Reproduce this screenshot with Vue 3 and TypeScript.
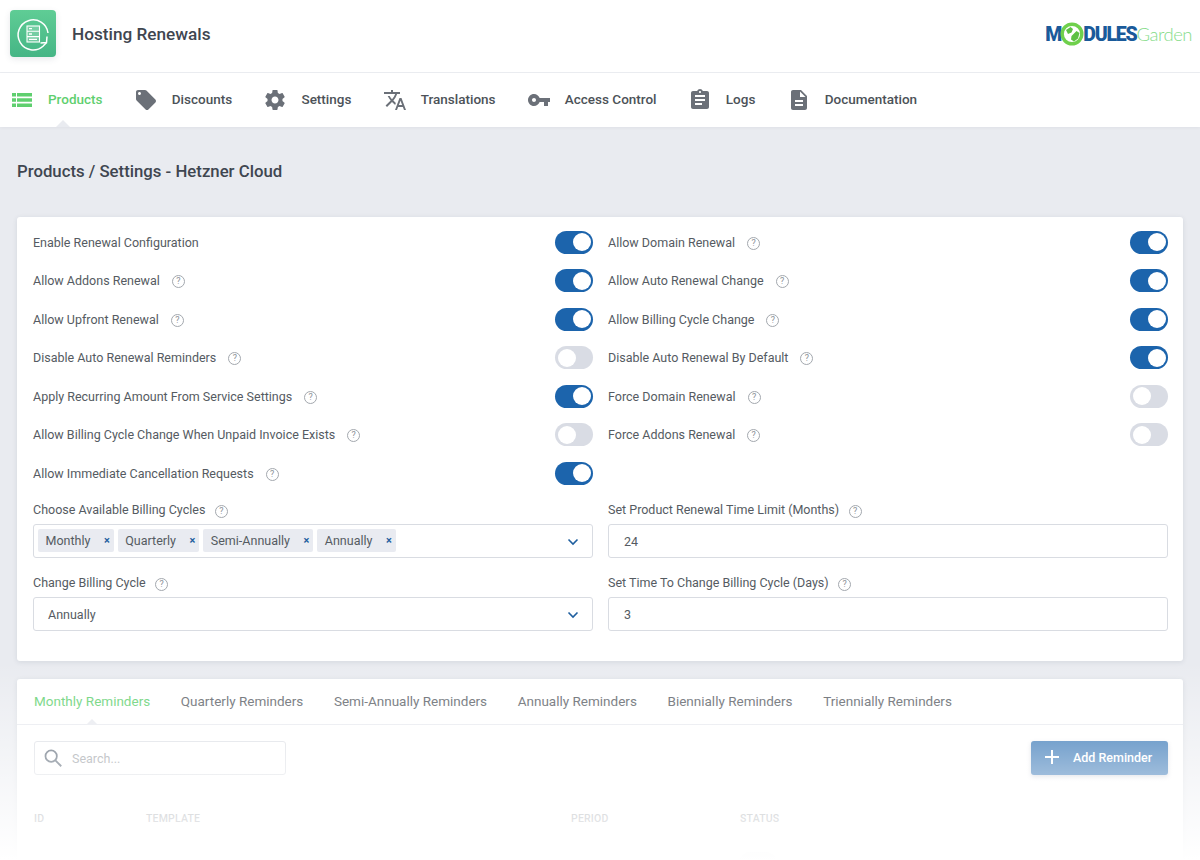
<script setup lang="ts">
interface NavItem { label: string; d: string; active?: boolean }
const nav: NavItem[] = [
  { label: 'Products', active: true, d: 'M2 5h4v3.6H2zM7 5h15v3.6H7zM2 10.2h4v3.6H2zM7 10.2h15v3.6H7zM2 15.4h4V19H2zM7 15.4h15V19H7z' },
  { label: 'Discounts', d: 'M21.41 11.58l-9-9C12.05 2.22 11.55 2 11 2H4c-1.1 0-2 .9-2 2v7c0 .55.22 1.05.59 1.42l9 9c.36.36.86.58 1.41.58.55 0 1.05-.22 1.41-.59l7-7c.37-.36.59-.86.59-1.41 0-.55-.23-1.06-.59-1.42zM5.5 7C4.67 7 4 6.33 4 5.5S4.67 4 5.5 4 7 4.67 7 5.5 6.33 7 5.5 7z' },
  { label: 'Settings', d: 'M19.43 12.98c.04-.32.07-.64.07-.98s-.03-.66-.07-.98l2.11-1.65c.19-.15.24-.42.12-.64l-2-3.46c-.12-.22-.39-.3-.61-.22l-2.49 1c-.52-.4-1.08-.73-1.69-.98l-.38-2.65C14.46 2.18 14.25 2 14 2h-4c-.25 0-.46.18-.49.42l-.38 2.65c-.61.25-1.17.59-1.69.98l-2.49-1c-.23-.09-.49 0-.61.22l-2 3.46c-.13.22-.07.49.12.64l2.11 1.65c-.04.32-.07.65-.07.98s.03.66.07.98l-2.11 1.65c-.19.15-.24.42-.12.64l2 3.46c.12.22.39.3.61.22l2.49-1c.52.4 1.08.73 1.69.98l.38 2.65c.03.24.24.42.49.42h4c.25 0 .46-.18.49-.42l.38-2.65c.61-.25 1.17-.59 1.69-.98l2.49 1c.23.09.49 0 .61-.22l2-3.46c.12-.22.07-.49-.12-.64l-2.11-1.65zM12 15.5c-1.93 0-3.5-1.57-3.5-3.5s1.57-3.5 3.5-3.5 3.5 1.57 3.5 3.5-1.57 3.5-3.5 3.5z' },
  { label: 'Translations', d: 'M12.87 15.07l-2.54-2.51.03-.03c1.74-1.94 2.98-4.17 3.71-6.53H17V4h-7V2H8v2H1v1.99h11.17C11.5 7.92 10.44 9.75 9 11.35 8.07 10.32 7.3 9.19 6.69 8h-2c.73 1.63 1.73 3.17 2.98 4.56l-5.09 5.02L4 19l5-5 3.11 3.11.76-2.04zM18.5 10h-2L12 22h2l1.12-3h4.75L21 22h2l-4.5-12zm-2.62 7l1.62-4.33L19.12 17h-3.24z' },
  { label: 'Access Control', d: 'M12.65 10C11.83 7.67 9.61 6 7 6c-3.31 0-6 2.69-6 6s2.69 6 6 6c2.61 0 4.83-1.67 5.65-4H17v4h4v-4h2v-4H12.65zM7 14c-1.1 0-2-.9-2-2s.9-2 2-2 2 .9 2 2-.9 2-2 2z' },
  { label: 'Logs', d: 'M19 3h-4.18C14.4 1.84 13.3 1 12 1c-1.3 0-2.4.84-2.82 2H5c-1.1 0-2 .9-2 2v14c0 1.1.9 2 2 2h14c1.1 0 2-.9 2-2V5c0-1.1-.9-2-2-2zm-7 0c.55 0 1 .45 1 1s-.45 1-1 1-1-.45-1-1 .45-1 1-1zm2 14H7v-2h7v2zm3-4H7v-2h10v2zm0-4H7V7h10v2z' },
  { label: 'Documentation', d: 'M14 2H6c-1.1 0-1.99.9-1.99 2L4 20c0 1.1.89 2 1.99 2H18c1.1 0 2-.9 2-2V8l-6-6zm2 16H8v-2h8v2zm0-4H8v-2h8v2zm-3-5V3.5L18.5 9H13z' },
]

interface Row { label: string; help: boolean; on: boolean }
const rows: (Row | null)[] = [
  { label: 'Enable Renewal Configuration', help: false, on: true },
  { label: 'Allow Domain Renewal', help: true, on: true },
  { label: 'Allow Addons Renewal', help: true, on: true },
  { label: 'Allow Auto Renewal Change', help: true, on: true },
  { label: 'Allow Upfront Renewal', help: true, on: true },
  { label: 'Allow Billing Cycle Change', help: true, on: true },
  { label: 'Disable Auto Renewal Reminders', help: true, on: false },
  { label: 'Disable Auto Renewal By Default', help: true, on: true },
  { label: 'Apply Recurring Amount From Service Settings', help: true, on: true },
  { label: 'Force Domain Renewal', help: true, on: false },
  { label: 'Allow Billing Cycle Change When Unpaid Invoice Exists', help: true, on: false },
  { label: 'Force Addons Renewal', help: true, on: false },
  { label: 'Allow Immediate Cancellation Requests', help: true, on: true },
  null,
]
const cycles = ['Monthly', 'Quarterly', 'Semi-Annually', 'Annually']
const tabs = ['Monthly Reminders', 'Quarterly Reminders', 'Semi-Annually Reminders', 'Annually Reminders', 'Biennially Reminders', 'Triennially Reminders']
</script>

<template>
  <div class="page">
    <header class="top">
      <div class="brand">
        <div class="app-icon">
          <svg viewBox="0 0 46 47" width="46" height="47" fill="none">
            <path d="M38 23A15 15 0 1 0 33 36.2l3.5-3.7" stroke="#fff" stroke-width="1.5" />
            <path d="M30.5 33l6-.5.5-6" stroke="#fff" stroke-width="1.5" />
            <rect x="17" y="16" width="12.5" height="16" fill="#dff5e9" fill-opacity=".25" stroke="#fff" stroke-width="1.1" />
            <path d="M17 21.3h12.5M17 26.6h12.5" stroke="#fff" stroke-width="1.1" />
            <path d="M19 18.7h3M19 24h3M19 29.3h8" stroke="#fff" stroke-width="1.3" />
          </svg>
        </div>
        <span class="app-name">Hosting Renewals</span>
      </div>
      <div class="logo">
        <span class="logo-bold">M</span>
        <svg class="globe" viewBox="0 0 24 24" width="24" height="24">
          <circle cx="12" cy="12" r="9.8" fill="#fff" stroke="#6fd04c" stroke-width="3.4" />
          <path d="M6 8l4.500-3 2.500 2-1.500 3.500L8 12zM11.500 14l5-5 3 2-1.500 5.500-4 3-3-2z" fill="#5cc043" />
        </svg>
        <span class="logo-bold">DULES</span><span class="logo-thin">Garden</span>
      </div>
    </header>

    <nav class="nav">
      <a v-for="n in nav" :key="n.label" class="nav-item" :class="{ active: n.active }">
        <svg class="nav-icon" viewBox="0 0 24 24" width="24" height="24"><path :d="n.d" /></svg>
        <span>{{ n.label }}</span>
      </a>
    </nav>

    <main class="main">
      <h1 class="title">Products / Settings - Hetzner Cloud</h1>

      <section class="card settings">
        <div class="toggles">
          <template v-for="(r, i) in rows" :key="i">
            <div v-if="r" class="row">
              <span class="label">{{ r.label }}<span v-if="r.help" class="help">?</span></span>
              <span class="toggle" :class="{ on: r.on }"><span class="knob"></span></span>
            </div>
            <div v-else></div>
          </template>
        </div>

        <div class="fields">
          <div class="field">
            <div class="label">Choose Available Billing Cycles<span class="help">?</span></div>
            <div class="input tags-input">
              <span v-for="c in cycles" :key="c" class="tag">{{ c }}<span class="x">×</span></span>
              <svg class="chev" viewBox="0 0 12 8" width="12" height="8" fill="none"><path d="M1.5 1.5L6 6l4.500-4.500" stroke="#1f5f9f" stroke-width="1.6" /></svg>
            </div>
          </div>
          <div class="field">
            <div class="label">Set Product Renewal Time Limit (Months)<span class="help">?</span></div>
            <div class="input">24</div>
          </div>
          <div class="field">
            <div class="label">Change Billing Cycle<span class="help">?</span></div>
            <div class="input select">Annually
              <svg class="chev" viewBox="0 0 12 8" width="12" height="8" fill="none"><path d="M1.5 1.5L6 6l4.500-4.500" stroke="#1f5f9f" stroke-width="1.6" /></svg>
            </div>
          </div>
          <div class="field">
            <div class="label">Set Time To Change Billing Cycle (Days)<span class="help">?</span></div>
            <div class="input">3</div>
          </div>
        </div>
      </section>

      <section class="card reminders">
        <div class="tabs">
          <span v-for="(t, i) in tabs" :key="t" class="tab" :class="{ active: i === 0 }">{{ t }}</span>
        </div>
        <div class="toolbar">
          <div class="search">
            <svg viewBox="0 0 24 24" width="22" height="22" fill="none"><circle cx="10" cy="10" r="6.2" stroke="#4a5868" stroke-width="1.9" /><path d="M14.6 14.6L21 21" stroke="#4a5868" stroke-width="2" /></svg>
            <span class="placeholder">Search...</span>
          </div>
          <button class="add" type="button">
            <svg viewBox="0 0 16 16" width="16" height="16"><path d="M7 1h2v6h6v2H9v6H7V9H1V7h6z" fill="#fff" /></svg>
            Add Reminder
          </button>
        </div>
        <div class="thead">
          <span class="c-id">ID</span>
          <span class="c-tpl">TEMPLATE</span>
          <span class="c-per">PERIOD</span>
          <span>STATUS</span>
        </div>
        <div class="tbody"><span class="pill"></span></div>
      </section>
    </main>

    <div class="fade"></div>
  </div>
</template>

<style>
html, body { margin: 0; background: #e9ebf0; }
</style>

<style scoped>
.page {
  position: relative;
  width: 1200px;
  height: 860px;
  overflow: hidden;
  background: #e9ebf0;
  font-family: Roboto, "Liberation Sans", sans-serif;
  color: #4c5258;
}
.top {
  height: 72px;
  box-sizing: content-box;
  background: #fff;
  border-bottom: 1px solid #eceef2;
  display: flex;
  align-items: center;
  justify-content: space-between;
  padding: 0 8px 0 10px;
}
.brand { display: flex; align-items: center; gap: 16px; margin-top: -5px; }
.app-icon {
  width: 46px;
  height: 47px;
  border-radius: 4px;
  background: linear-gradient(180deg, #5fcd95, #45b585);
  box-shadow: 0 2px 6px rgba(60, 70, 90, .12);
}
.app-icon svg { display: block; }
.app-name { font-size: 17.2px; font-weight: 500; color: #3f4650; }
.logo { display: flex; align-items: center; margin-top: -4px; }
.logo-bold { font-size: 19.5px; font-weight: 900; color: #1a5a9a; letter-spacing: -1.2px; }
.logo-thin { font-family: Lato, sans-serif; font-size: 18.5px; font-weight: 300; color: #86dc8a; letter-spacing: -.5px; }
.globe { margin: 0 -1px; }

.nav {
  height: 54px;
  background: #fff;
  display: flex;
  align-items: center;
  padding-left: 10px;
  gap: 31.3px;
  box-shadow: 0 1px 3px rgba(60, 70, 90, .06);
}
.nav-item {
  position: relative;
  display: flex;
  align-items: center;
  gap: 14px;
  height: 100%;
  font-size: 13.5px;
  font-weight: 500;
  color: #4c5258;
}
.nav-item span { margin-top: -2px; }
.nav-icon { fill: #6b7078; flex: none; }
.nav-item.active { color: #5fcf6f; }
.nav-item.active .nav-icon { fill: #5fcf6f; }
.nav-item.active::after {
  content: "";
  position: absolute;
  left: 46px;
  bottom: 0;
  border: 7px solid transparent;
  border-top: 0;
  border-bottom-color: #e9ebf0;
}

.main { padding: 0 17px; }
.title {
  margin: 0;
  padding: 33px 0 35px;
  font-size: 16.75px;
  line-height: 22px;
  font-weight: 500;
  color: #3f4650;
}
.card {
  background: #fff;
  border-radius: 3px;
  box-shadow: 0 1px 5px rgba(60, 70, 90, .12);
}
.settings { height: 444px; padding: 6px 15px 0 16px; box-sizing: border-box; }
.toggles {
  display: grid;
  grid-template-columns: 560px 560px;
  column-gap: 15px;
  grid-auto-rows: 38.5px;
}
.row { display: flex; align-items: center; justify-content: space-between; }
.row .label { padding-top: 1px; }
.label { font-size: 12.5px; line-height: 16px; color: #555b62; }
.help {
  display: inline-flex;
  align-items: center;
  justify-content: center;
  width: 11px;
  height: 11px;
  margin-left: 12px;
  border: 1px solid #a3a8ae;
  border-radius: 50%;
  font-size: 9px;
  line-height: 1;
  color: #8d9298;
  vertical-align: 1px;
}
.toggle {
  width: 38px;
  height: 23px;
  border-radius: 12px;
  background: #d9dce4;
  position: relative;
  flex: none;
}
.knob {
  position: absolute;
  top: 2.5px;
  left: 2.5px;
  width: 18px;
  height: 18px;
  border-radius: 50%;
  background: #fff;
}
.toggle.on { background: #1c64ac; }
.toggle.on .knob { left: 17.5px; }

.fields {
  display: grid;
  grid-template-columns: 560px 560px;
  column-gap: 15px;
  row-gap: 17px;
  margin-top: 9px;
}
.field .label { height: 16px; margin-bottom: 6px; }
.field .help { margin-left: 9.5px; vertical-align: 0; }
.input {
  position: relative;
  height: 34px;
  box-sizing: border-box;
  border: 1px solid #d9dce2;
  border-radius: 3px;
  display: flex;
  align-items: center;
  padding: 2px 0 0 15px;
  font-size: 12.5px;
  color: #555b62;
  background: #fff;
}
.select { padding-left: 14px; }
.tags-input { padding: 0 0 0 4px; gap: 4px; }
.tag {
  display: inline-flex;
  align-items: center;
  justify-content: space-between;
  height: 23px;
  padding: 0 4px 0 7.5px;
  box-sizing: border-box;
  border-radius: 2px;
  background: #e9ebf1;
  gap: 13.5px;
}
.x { color: #1f5f9f; font-weight: 700; font-size: 11px; }
.chev { position: absolute; right: 13px; top: 13.5px; }

.reminders { margin-top: 18px; height: 400px; }
.tabs {
  height: 45px;
  display: flex;
  align-items: center;
  gap: 30.6px;
  padding: 0 17px;
  border-bottom: 1px solid #e6e8ee;
  font-size: 13.5px;
  color: #5d6268;
}
.tab { position: relative; line-height: 45px; }
.tab.active { color: #5fcf6f; }
.tab.active::after {
  content: "";
  position: absolute;
  left: 52px;
  bottom: -1px;
  border: 6px solid transparent;
  border-top: 0;
  border-bottom-color: #e6e8ee;
}
.toolbar {
  display: flex;
  justify-content: space-between;
  padding: 16px 15px 0 17px;
}
.search {
  width: 252px;
  height: 34px;
  box-sizing: border-box;
  border: 1px solid #d9dce2;
  border-radius: 3px;
  display: flex;
  align-items: center;
  gap: 8px;
  padding-left: 7px;
  font-size: 12.5px;
}
.placeholder { color: #8d9298; }
.add {
  width: 137px;
  height: 34px;
  border: 0;
  border-radius: 3px;
  background: #1c64ac;
  color: #fff;
  font: 500 12.5px Roboto, sans-serif;
  display: flex;
  align-items: center;
  gap: 13px;
  padding: 0 0 2px 13px;
  box-shadow: 0 2px 4px rgba(40, 60, 90, .25);
}
.thead {
  display: flex;
  padding: 37px 0 0 17px;
  font-size: 10.5px;
  font-weight: 500;
  color: #70767e;
  letter-spacing: .2px;
  line-height: 14px;
}
.c-id { width: 112px; }
.c-tpl { width: 425px; }
.c-per { width: 169px; }
.tbody { padding: 26px 0 0 722px; }
.pill { display: block; width: 38px; height: 23px; border-radius: 12px; background: #d9dce4; }

.fade {
  position: absolute;
  left: 0;
  right: 0;
  top: 662px;
  bottom: 0;
  background: linear-gradient(180deg, rgba(255,255,255,0) 0%, #fff 100%);
  pointer-events: none;
}
</style>
